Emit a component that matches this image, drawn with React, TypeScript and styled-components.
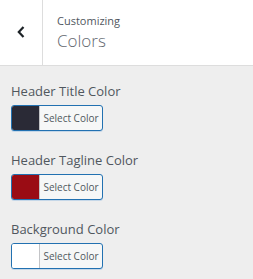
import * as React from "react";
import styled, { createGlobalStyle } from "styled-components";

const GlobalStyle = createGlobalStyle`
  html, body {
    margin: 0;
    padding: 0;
    background: #eeeeee;
  }
  body {
    font-family: "Open Sans", "Noto Sans", sans-serif;
  }
`;

const Panel = styled.div`
  width: 253px;
  height: 279px;
  background: #eeeeee;
  overflow: hidden;
`;

const Header = styled.div`
  display: flex;
  height: 65px;
  background: #ffffff;
  border-bottom: 1px solid #dddddd;
`;

const BackButton = styled.button`
  width: 43px;
  flex: none;
  display: flex;
  align-items: center;
  justify-content: center;
  padding: 0 0 1px 0;
  border: none;
  border-right: 1px solid #dddddd;
  background: transparent;
  color: #1d2327;
`;

const Titles = styled.div`
  display: flex;
  flex-direction: column;
  padding: 13px 0 0 14px;
`;

const Overline = styled.span`
  font-size: 11px;
  line-height: 16px;
  color: #50575e;
`;

const Title = styled.h3`
  margin: 0;
  font-size: 17px;
  line-height: 24px;
  font-weight: 300;
  color: #646970;
`;

const Controls = styled.div`
  display: flex;
  flex-direction: column;
  gap: 19px;
  padding: 15px 11px 0;
`;

const Control = styled.div`
  display: flex;
  flex-direction: column;
  gap: 4px;
`;

const Label = styled.span`
  font-size: 13px;
  line-height: 20px;
  font-weight: 500;
  color: #50575e;
`;

const ColorButton = styled.button`
  display: flex;
  align-items: stretch;
  width: 92px;
  height: 26px;
  padding: 0;
  border: 1px solid #2271b1;
  border-radius: 3px;
  background: #f6f7f7;
  overflow: hidden;
  box-shadow: 0 1px 0 #c5d7e8;
`;

const Swatch = styled.span<{ $color: string }>`
  width: 27px;
  flex: none;
  background: ${({ $color }) => $color};
  border-right: 1px solid #c3c4c7;
`;

const ButtonText = styled.span`
  flex: 1;
  display: flex;
  align-items: center;
  justify-content: center;
  font-family: "Open Sans", "Noto Sans", sans-serif;
  font-size: 10px;
  color: #50575e;
`;

const colors = [
  { label: "Header Title Color", value: "#2a2a36" },
  { label: "Header Tagline Color", value: "#9a0c14" },
  { label: "Background Color", value: "#ffffff" },
];

const App = () => {
  return (
    <Panel>
      <GlobalStyle />
      <Header>
        <BackButton aria-label="Back">
          <svg width="8" height="12" viewBox="0 0 8 12">
            <path
              d="M6.5 1 L1.8 6 L6.5 11"
              fill="none"
              stroke="currentColor"
              strokeWidth="2.2"
            />
          </svg>
        </BackButton>
        <Titles>
          <Overline>Customizing</Overline>
          <Title>Colors</Title>
        </Titles>
      </Header>
      <Controls>
        {colors.map((c) => (
          <Control key={c.label}>
            <Label>{c.label}</Label>
            <ColorButton>
              <Swatch $color={c.value} />
              <ButtonText>Select Color</ButtonText>
            </ColorButton>
          </Control>
        ))}
      </Controls>
    </Panel>
  );
};

export default App;
